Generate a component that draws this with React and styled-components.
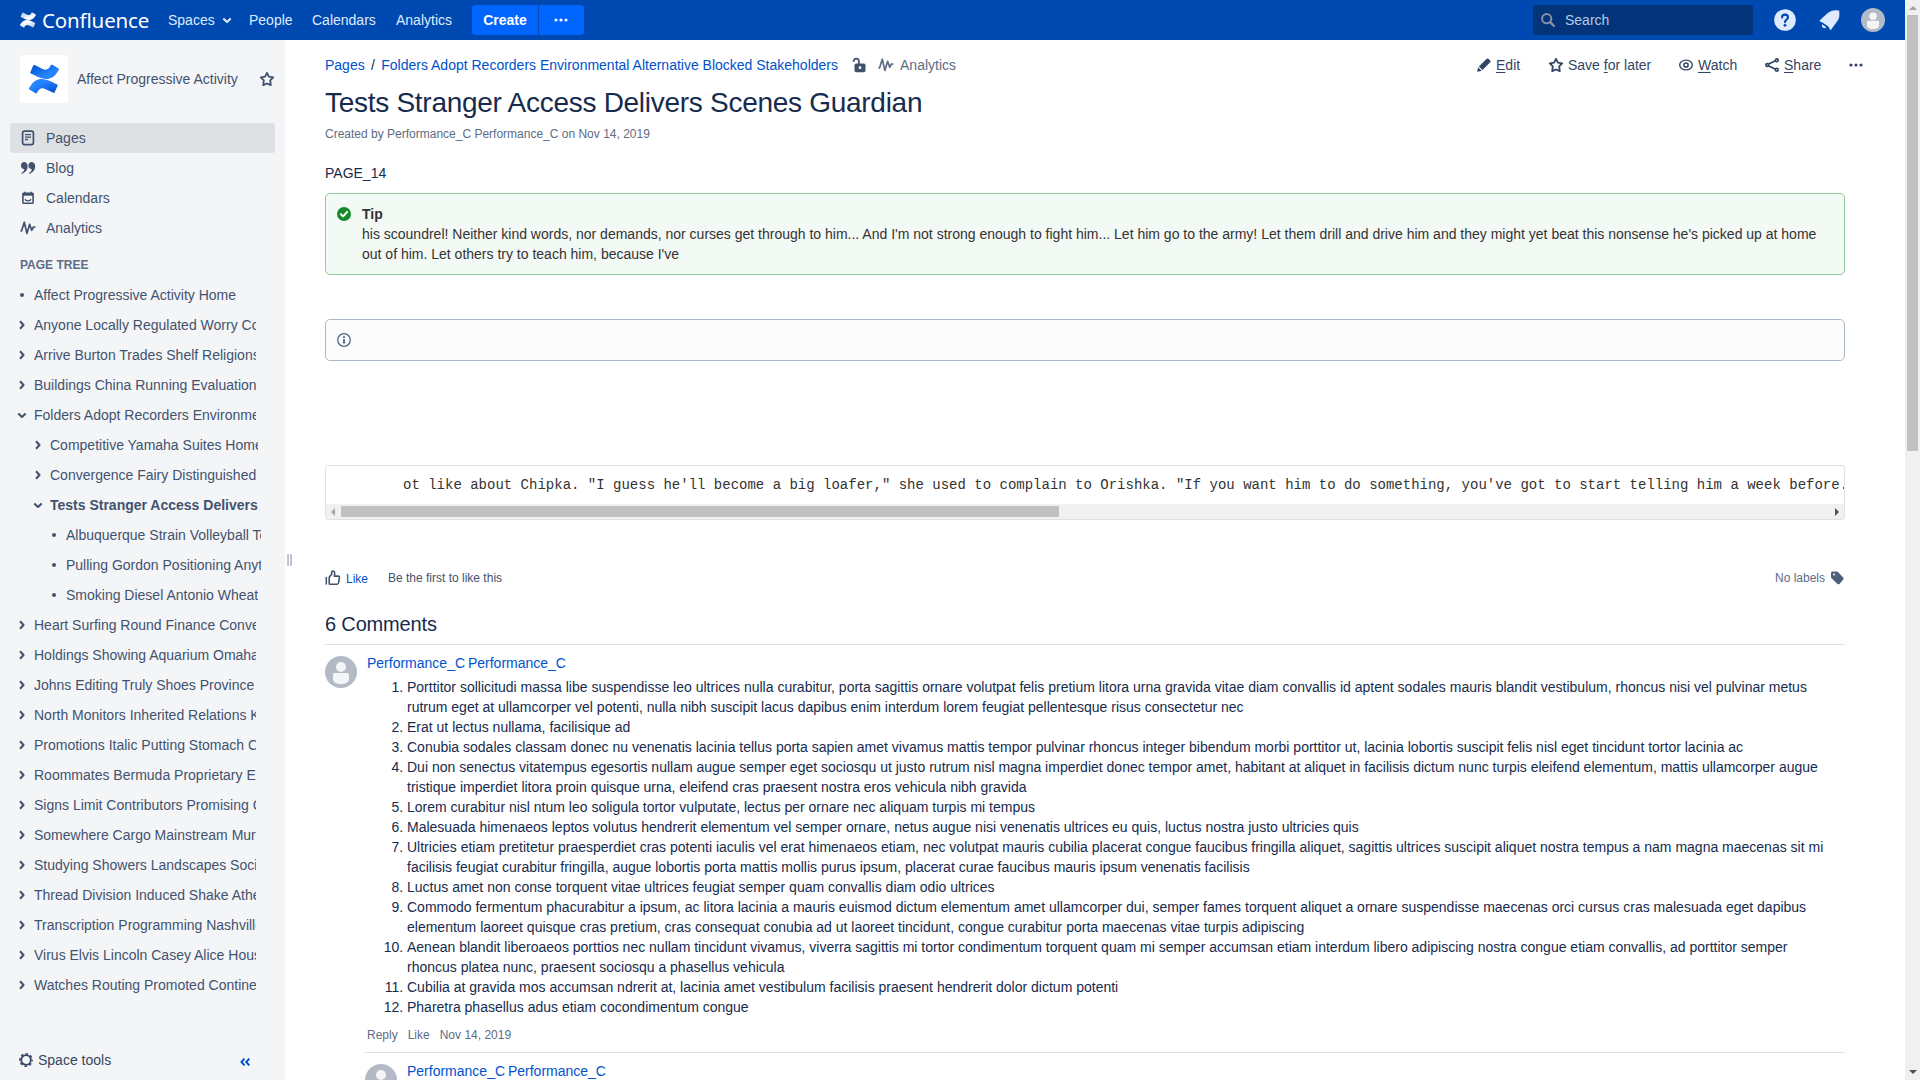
import React from 'react';
import styled, { createGlobalStyle } from 'styled-components';

const Global = createGlobalStyle`
  *, *::before, *::after { box-sizing: border-box; }
  html, body { margin: 0; padding: 0; overflow: hidden; background: #fff; }
  body {
    font-family: "Liberation Sans", Arial, sans-serif;
    font-size: 14px;
    line-height: 20px;
    color: #172b4d;
  }
  svg { display: block; flex: none; }
`;

const Window = styled.div`
  display: flex;
  width: 1920px;
  height: 1080px;
  overflow: hidden;
`;

const Page = styled.div`
  display: flex;
  flex-direction: column;
  width: 1905px;
  height: 1080px;
`;

/* ---------- header ---------- */

const Header = styled.header`
  display: flex;
  justify-content: space-between;
  align-items: center;
  flex: none;
  height: 40px;
  padding: 0 20px 0 20px;
  background: #0049b0;
  color: #deebff;
`;

const HeaderGroup = styled.div`
  display: flex;
  align-items: center;
`;

const Brand = styled.div`
  display: flex;
  align-items: center;
  gap: 6px;
  width: 148px;
`;

const Wordmark = styled.span`
  font-family: "Noto Sans", sans-serif;
  font-size: 20.5px;
  line-height: 24px;
  letter-spacing: -0.15px;
  color: #fff;
`;

const NavItem = styled.a`
  display: flex;
  align-items: center;
  gap: 6px;
  width: ${(p) => p.$width}px;
`;

const CreateGroup = styled.div`
  display: flex;
  gap: 1px;
  height: 30px;
`;

const CreateButton = styled.button`
  display: flex;
  align-items: center;
  justify-content: center;
  width: ${(p) => p.$width}px;
  height: 30px;
  padding: ${(p) => (p.$end ? '0 2px 0 0' : '0')};
  border: 0;
  border-radius: ${(p) => (p.$end ? '0 3px 3px 0' : '3px 0 0 3px')};
  background: #0065ff;
  color: #fff;
  font: bold 14px "Liberation Sans", Arial, sans-serif;
`;

const Search = styled.div`
  display: flex;
  align-items: center;
  gap: 10px;
  width: 220px;
  height: 30px;
  padding-left: 8px;
  margin-right: 21px;
  border-radius: 3px;
  background: #03347a;
  color: #b5c8e6;
`;

const HeaderIcon = styled.div`
  margin-right: ${(p) => p.$gap}px;
`;

/* ---------- sidebar ---------- */

const Body = styled.div`
  display: flex;
  flex: 1;
  min-height: 0;
`;

const Sidebar = styled.aside`
  display: flex;
  flex-direction: column;
  width: 285px;
  padding-top: 15px;
  background: #f4f5f7;
  color: #42526e;
`;

const SpaceHeader = styled.div`
  display: flex;
  align-items: center;
  height: 48px;
  padding: 0 10px 0 20px;
`;

const SpaceLogo = styled.div`
  display: flex;
  align-items: center;
  justify-content: center;
  width: 48px;
  height: 48px;
  border-radius: 3px;
  background: #fff;
`;

const SpaceName = styled.span`
  flex: 1;
  margin-left: 9px;
`;

const SideNav = styled.nav`
  margin: 20px 10px 0;
`;

const SideLink = styled.a`
  display: flex;
  align-items: center;
  gap: 10px;
  height: 30px;
  padding-left: 10px;
  border-radius: 3px;
  background: ${(p) => (p.$active ? '#dfe0e4' : 'transparent')};
`;

const TreeTitle = styled.h5`
  margin: 12px 0 5px 20px;
  font-size: 12px;
  line-height: 20px;
  font-weight: bold;
  color: #5e6c84;
`;

const Tree = styled.div`
  flex: 1;
`;

const TreeRow = styled.div`
  display: flex;
  align-items: center;
  width: ${(p) => [256, 258, 261][p.$level]}px;
  height: 30px;
  padding-left: ${(p) => 16 + p.$level * 16}px;
  overflow: hidden;
  white-space: nowrap;
  font-weight: ${(p) => (p.$current ? 'bold' : 'normal')};
`;

const TreeMarker = styled.span`
  display: flex;
  flex: none;
  width: 18px;
`;

const TreeLabel = styled.span`
  overflow: hidden;
`;

const SideFooter = styled.div`
  display: flex;
  align-items: center;
  justify-content: space-between;
  height: 40px;
  padding: 0 35px 0 19px;
  color: #344563;
`;

const SpaceTools = styled.span`
  display: flex;
  align-items: center;
  gap: 5px;
`;

const Collapse = styled.span`
  padding-top: 3px;
`;

const Splitter = styled.div`
  display: flex;
  align-items: center;
  gap: 1px;
  width: 40px;
  padding-left: 2px;
`;

const Grip = styled.i`
  width: 2px;
  height: 12px;
  background: #c1c7d0;
`;

/* ---------- content ---------- */

const Content = styled.main`
  width: 1520px;
  overflow: hidden;
`;

const TopRow = styled.div`
  display: flex;
  justify-content: space-between;
  height: 20px;
  margin-top: 15px;
`;

const ContentShell = styled.div`
  display: flex;
  flex-direction: column;
  width: 1540px;
`;

const Crumbs = styled.div`
  display: flex;
  align-items: center;
`;

const Link = styled.a`
  color: #0052cc;
`;

const Author = styled(Link)`
  word-spacing: -1px;
`;

const Slash = styled.span`
  width: 16.500px;
  text-align: center;
`;

const CrumbIcon = styled.span`
  margin: 0 ${(p) => p.$right}px 0 ${(p) => p.$left}px;
`;

const Muted = styled.span`
  color: #5e6c84;
`;

const Actions = styled.div`
  display: flex;
  align-items: center;
  color: #344563;
`;

const Action = styled.a`
  display: flex;
  align-items: center;
  gap: ${(p) => p.$gap}px;
  width: ${(p) => p.$width}px;

  u { text-underline-offset: 2px; }
`;

const Title = styled.h1`
  margin: 10px 0 0;
  font-size: 28px;
  line-height: 35px;
  font-weight: normal;
  letter-spacing: -0.28px;
`;

const Meta = styled.div`
  margin-top: 4px;
  font-size: 12px;
  color: #5e6c84;
`;

const Paragraph = styled.p`
  margin: 19px 0 10px;
`;

const Panel = styled.div`
  display: flex;
  height: ${(p) => p.$height}px;
  padding: 10px 10px 10px 11px;
  border: 1px solid ${(p) => (p.$tip ? '#91c89c' : '#aab8c6')};
  border-radius: 5px;
  background: ${(p) => (p.$tip ? '#f3f9f4' : '#fcfcfc')};
  color: #333;
`;

const PanelIcon = styled.div`
  width: 25px;
  padding-top: 3px;
`;

const PanelText = styled.div`
  flex: 1;
`;

const Spacer = styled.div`
  height: ${(p) => p.$size}px;
`;

const CodeBox = styled.div`
  display: flex;
  flex-direction: column;
  height: 55px;
  border: 1px solid #dfe1e5;
  border-radius: 3px;
  overflow: hidden;
`;

const CodeText = styled.pre`
  flex: 1;
  margin: 0;
  padding: 9px 0 0 77px;
  overflow: hidden;
  font-family: "Liberation Mono", monospace;
  font-size: 14px;
  line-height: 20px;
  color: #333;
`;

const HBar = styled.div`
  display: flex;
  align-items: center;
  justify-content: space-between;
  height: 15px;
  padding: 0 5px;
  background: #f0f0f0;
`;

const HThumb = styled.div`
  width: 718px;
  height: 11px;
  margin: 0 auto 0 6px;
  background: #c0c0c0;
`;

const LikeRow = styled.div`
  display: flex;
  align-items: center;
  height: 20px;
  margin-top: 48px;
  font-size: 12px;
`;

const LikeLink = styled(Link)`
  width: 42px;
  margin-left: 5px;
  padding-top: 1px;
`;

const LikeNote = styled.span`
  flex: 1;
  color: #42526e;
`;

const Labels = styled.span`
  display: flex;
  align-items: center;
  gap: 5px;
  color: #5e6c84;
`;

const CommentsTitle = styled.h2`
  margin: 24px 0 0;
  height: 33px;
  border-bottom: 1px solid #dfe1e5;
  font-size: 20px;
  line-height: 24px;
  font-weight: normal;
  letter-spacing: -0.16px;
`;

const Comment = styled.article`
  display: flex;
  gap: 10px;
  margin-left: ${(p) => (p.$reply ? 40 : 0)}px;
  padding-top: 11px;
  border-top: ${(p) => (p.$reply ? '1px solid #dfe1e5' : '0')};
`;

const CommentBody = styled.div`
  flex: 1;
  margin-top: -3px;
`;

const CommentList = styled.ol`
  margin: 4px 0 0;
  padding: 0 10px 0 40px;
`;

const CommentFooter = styled.div`
  display: flex;
  gap: 10px;
  margin: 8px 0 7px;
  font-size: 12px;
  color: #5e6c84;
`;

/* ---------- window scrollbar ---------- */

const VBar = styled.div`
  display: flex;
  flex-direction: column;
  align-items: center;
  justify-content: space-between;
  width: 15px;
  height: 1080px;
  padding: 6px 0;
  background: #f0f0f0;
`;

const VThumb = styled.div`
  width: 11px;
  height: 436px;
  margin: 5px 0 auto;
  background: #c0c0c0;
`;

/* ---------- icons ---------- */

const Arrow = ({ dir, color }) => {
  const d = { up: 'M0 4 4 0l4 4z', down: 'M0 0h8L4 4z', left: 'M4 0v8L0 4z', right: 'M0 0v8l4-4z' }[dir];
  const vertical = dir === 'up' || dir === 'down';
  return <svg width={vertical ? 8 : 4} height={vertical ? 4 : 8}><path d={d} fill={color} /></svg>;
};

const ConfluenceMark = ({ size, from, to, id }) => (
  <svg width={size} height={size} viewBox="0 0 256 246">
    <defs>
      <linearGradient id={`${id}a`} x1="99%" y1="113%" x2="34%" y2="38%">
        <stop offset="18%" stopColor={from} />
        <stop offset="100%" stopColor={to} />
      </linearGradient>
      <linearGradient id={`${id}b`} x1="1%" y1="-13%" x2="66%" y2="62%">
        <stop offset="18%" stopColor={from} />
        <stop offset="100%" stopColor={to} />
      </linearGradient>
    </defs>
    <path fill={`url(#${id}a)`} d="M9.26 187.28c-2.64 4.31-5.6 9.3-8.12 13.28a8.13 8.13 0 0 0 2.72 11.05l52.82 32.5a8.13 8.13 0 0 0 11.26-2.76c2.11-3.53 4.84-8.13 7.8-13.05 20.93-34.54 41.98-30.31 79.93-12.19l52.37 24.9a8.13 8.13 0 0 0 10.93-4.06l25.15-56.88a8.13 8.13 0 0 0-4.06-10.65c-11.05-5.2-33.03-15.56-52.82-25.1C116.06 109.7 55.54 112.02 9.26 187.28z" />
    <path fill={`url(#${id}b)`} d="M246.12 58.23c2.64-4.3 5.6-9.3 8.12-13.28a8.13 8.13 0 0 0-2.72-11.05L198.7 1.4a8.13 8.13 0 0 0-11.42 2.7c-2.11 3.54-4.83 8.13-7.8 13.05-20.92 34.54-41.97 30.32-79.92 12.2L47.35 4.57a8.13 8.13 0 0 0-10.93 4.06L11.28 65.51a8.13 8.13 0 0 0 4.06 10.65c11.05 5.2 33.03 15.56 52.82 25.1 71.26 34.5 131.77 32.1 177.96-43.03z" />
  </svg>
);

const Chevron = ({ down, color = 'currentColor' }) => (
  <svg width="12" height="12" viewBox="0 0 12 12" fill="none" stroke={color} strokeWidth="2.100" strokeLinejoin="round">
    <path d={down ? 'M2.300 4.400 6 7.900l3.700-3.500' : 'M4 2.300 7.500 6 4 9.700'} />
  </svg>
);

const Dots = ({ width = 14 }) => (
  <svg width={width} height="4" viewBox="0 0 14 4" fill="currentColor">
    <circle cx="2" cy="2" r="1.6" /><circle cx="7" cy="2" r="1.6" /><circle cx="12" cy="2" r="1.6" />
  </svg>
);

const StarIcon = () => (
  <svg width="16" height="16" viewBox="0 0 16 16" fill="none" stroke="currentColor" strokeWidth="1.8" strokeLinejoin="round">
    <path d="M8 1.800l1.900 3.900 4.300.6-3 3 .6 4.800L8 12.500l-3.800 1.600.6-4.800-3-3 4.300-.6z" />
  </svg>
);

const Pulse = () => (
  <svg width="16" height="16" viewBox="0 0 16 16" fill="none" stroke="currentColor" strokeWidth="1.700" strokeLinejoin="round" strokeLinecap="round">
    <path d="M1 10.800h.6L4.300 2.200 6.900 13.400 9.600 4.300l2.100 6 1.700-3.300h1.400" />
  </svg>
);

const PageIcon = () => (
  <svg width="16" height="16" viewBox="0 0 16 16" fill="none" stroke="currentColor">
    <rect x="2.600" y="1.200" width="10.800" height="13.400" rx="1.800" strokeWidth="1.700" />
    <path d="M5 4.700h6M5 7.100h6M5 9.500h3" strokeWidth="1.300" />
  </svg>
);

const QuoteIcon = () => (
  <svg width="16" height="16" viewBox="0 0 16 16" fill="currentColor">
    <path d="M4 1.900c2.200 0 3.700 1.700 3.700 4.400 0 3.600-2.300 6.500-5.600 7.400-.7.1-.9-.7-.3-1 1.600-.9 2.400-2.200 2.500-3.500C2.300 9.300.9 7.700.9 5.600.9 3.500 2.300 1.900 4 1.900z" />
    <path d="M11.500 1.900c2.200 0 3.700 1.700 3.700 4.400 0 3.600-2.300 6.500-5.600 7.400-.7.1-.9-.7-.3-1 1.600-.9 2.400-2.200 2.500-3.500-2 .1-3.400-1.500-3.400-3.600 0-2.100 1.400-3.700 3.100-3.700z" />
  </svg>
);

const CalendarIcon = () => (
  <svg width="16" height="16" viewBox="0 0 16 16" fill="none" stroke="currentColor">
    <rect x="2.900" y="3.300" width="10.200" height="10" rx=".8" strokeWidth="1.600" />
    <path d="M2.500 4.500h11" strokeWidth="2.400" />
    <path d="M4.700 1.800v2M11.300 1.800v2" strokeWidth="1.600" />
    <path d="M5 9.300c.6 2 5.400 2 6 0" strokeWidth="1.300" />
  </svg>
);

const Gear = () => (
  <svg width="14" height="14" viewBox="0 0 14 14" fill="none" stroke="currentColor">
    <circle cx="7" cy="7" r="4.800" strokeWidth="1.800" />
    <circle cx="7" cy="7" r="6.200" strokeWidth="1.400" strokeDasharray="2.630 2.240" strokeDashoffset="1.300" />
  </svg>
);

const Avatar = ({ size }) => (
  <svg width={size} height={size} viewBox="0 0 32 32">
    <circle cx="16" cy="16" r="16" fill="#b3bac5" />
    <circle cx="16" cy="11" r="5" fill="#f4f5f7" />
    <path d="M8 18.500a1.500 1.500 0 0 1 1.500-1.500h13a1.500 1.500 0 0 1 1.500 1.500v5c0 6.200-16 6.200-16 0z" fill="#f4f5f7" />
  </svg>
);

const TREE = [
  ['Affect Progressive Activity Home', 0, 'leaf'],
  ['Anyone Locally Regulated Worry Contents', 0],
  ['Arrive Burton Trades Shelf Religions', 0],
  ['Buildings China Running Evaluation', 0],
  ['Folders Adopt Recorders Environmental', 0, 'open'],
  ['Competitive Yamaha Suites Homes', 1],
  ['Convergence Fairy Distinguished', 1],
  ['Tests Stranger Access Delivers', 1, 'open', true],
  ['Albuquerque Strain Volleyball Tops', 2, 'leaf'],
  ['Pulling Gordon Positioning Anything', 2, 'leaf'],
  ['Smoking Diesel Antonio Wheat', 2, 'leaf'],
  ['Heart Surfing Round Finance Conversion', 0],
  ['Holdings Showing Aquarium Omaha', 0],
  ['Johns Editing Truly Shoes Province', 0],
  ['North Monitors Inherited Relations K', 0],
  ['Promotions Italic Putting Stomach C', 0],
  ['Roommates Bermuda Proprietary E', 0],
  ['Signs Limit Contributors Promising C', 0],
  ['Somewhere Cargo Mainstream Mur', 0],
  ['Studying Showers Landscapes Soci', 0],
  ['Thread Division Induced Shake Athe', 0],
  ['Transcription Programming Nashville', 0],
  ['Virus Elvis Lincoln Casey Alice House', 0],
  ['Watches Routing Promoted Contine', 0],
];

const ITEMS = [
  'Porttitor sollicitudi massa libe suspendisse leo ultrices nulla curabitur, porta sagittis ornare volutpat felis pretium litora urna gravida vitae diam convallis id aptent sodales mauris blandit vestibulum, rhoncus nisi vel pulvinar metus rutrum eget at ullamcorper vel potenti, nulla nibh suscipit lacus dapibus enim interdum lorem feugiat pellentesque risus consectetur nec',
  'Erat ut lectus nullama, facilisique ad',
  'Conubia sodales classam donec nu venenatis lacinia tellus porta sapien amet vivamus mattis tempor pulvinar rhoncus integer bibendum morbi porttitor ut, lacinia lobortis suscipit felis nisl eget tincidunt tortor lacinia ac',
  'Dui non senectus vitatempus egesortis nullam augue semper eget sociosqu ut justo rutrum nisl magna imperdiet donec tempor amet, habitant at aliquet in facilisis dictum nunc turpis eleifend elementum, mattis ullamcorper augue tristique imperdiet litora proin quisque urna, eleifend cras praesent nostra eros vehicula nibh gravida',
  'Lorem curabitur nisl ntum leo soligula tortor vulputate, lectus per ornare nec aliquam turpis mi tempus',
  'Malesuada himenaeos leptos volutus hendrerit elementum vel semper ornare, netus augue nisi venenatis ultrices eu quis, luctus nostra justo ultricies quis',
  'Ultricies etiam pretitetur praesperdiet cras potenti iaculis vel erat himenaeos etiam, nec volutpat mauris cubilia placerat congue faucibus fringilla aliquet, sagittis ultrices suscipit aliquet nostra tempus a nam magna maecenas sit mi facilisis feugiat curabitur fringilla, augue lobortis porta mattis mollis purus ipsum, placerat curae faucibus mauris ipsum venenatis facilisis',
  'Luctus amet non conse torquent vitae ultrices feugiat semper quam convallis diam odio ultrices',
  'Commodo fermentum phacurabitur a ipsum, ac litora lacinia a mauris euismod dictum elementum amet ullamcorper dui, semper fames torquent aliquet a ornare suspendisse maecenas orci cursus cras malesuada eget dapibus elementum laoreet quisque cras pretium, cras consequat conubia ad ut laoreet tincidunt, congue curabitur porta maecenas vitae turpis adipiscing',
  'Aenean blandit liberoaeos porttios nec nullam tincidunt vivamus, viverra sagittis mi tortor condimentum torquent quam mi semper accumsan etiam interdum libero adipiscing nostra congue etiam convallis, ad porttitor semper rhoncus platea nunc, praesent sociosqu a phasellus vehicula',
  'Cubilia at gravida mos accumsan ndrerit at, lacinia amet vestibulum facilisis praesent hendrerit dolor dictum potenti',
  'Pharetra phasellus adus etiam cocondimentum congue',
];

const Marker = ({ kind }) => (
  <TreeMarker>
    {kind === 'leaf' ? (
      <svg width="12" height="12"><circle cx="6" cy="6" r="2" fill="currentColor" /></svg>
    ) : (
      <Chevron down={kind === 'open'} />
    )}
  </TreeMarker>
);

export default function App() {
  return (
    <Window>
      <Global />
      <Page>
        <Header>
          <HeaderGroup>
            <Brand>
              <ConfluenceMark size={16} from="#a9c3e8" to="#ffffff" id="h" />
              <Wordmark>Confluence</Wordmark>
            </Brand>
            <NavItem $width={81}>Spaces <Chevron down /></NavItem>
            <NavItem $width={63}>People</NavItem>
            <NavItem $width={84}>Calendars</NavItem>
            <NavItem $width={76}>Analytics</NavItem>
            <CreateGroup>
              <CreateButton $width={66}>Create</CreateButton>
              <CreateButton $width={45} $end><Dots /></CreateButton>
            </CreateGroup>
          </HeaderGroup>
          <HeaderGroup>
            <Search>
              <svg width="14" height="14" viewBox="0 0 14 14" fill="none" stroke="#8590a2">
                <circle cx="5.700" cy="5.700" r="4.600" strokeWidth="2" />
                <path d="M9.200 9.200 13 13" strokeWidth="2.400" strokeLinecap="round" />
              </svg>
              Search
            </Search>
            <HeaderIcon $gap={23}>
              <svg width="22" height="22" viewBox="0 0 22 22">
                <circle cx="11" cy="11" r="10.800" fill="#deebff" />
                <path d="M8 8.500c0-3.900 6-3.900 6 0 0 2.200-3 2.100-3 4.700" fill="none" stroke="#0049b0" strokeWidth="2.100" strokeLinecap="round" />
                <circle cx="11" cy="16.300" r="1.400" fill="#0049b0" />
              </svg>
            </HeaderIcon>
            <HeaderIcon $gap={21}>
              <svg width="21" height="21" viewBox="0 0 21 21" fill="#deebff">
                <path d="M12.500.9c2.400-.7 5-.7 6.500-.2l.9-.4.600.6-.4.900c.8 3 .3 6.700-1.500 9l-6.600 8.900c-.2.400-.6.400-.8 0l-1.900-3.200-5.500-3.700-3-1.600c-.4-.2-.4-.6 0-.9L8.500 3.300C9.600 2.300 11 1.300 12.500.9z" />
                <path d="M3.200 14.200 7.200 17.200c-.9 1.100-2.300 1.200-3.200.5s-1.400-2.200-.8-3.500z" />
              </svg>
            </HeaderIcon>
            <Avatar size={24} />
          </HeaderGroup>
        </Header>
        <Body>
          <Sidebar>
            <SpaceHeader>
              <SpaceLogo><ConfluenceMark size={30} from="#0052cc" to="#2684ff" id="s" /></SpaceLogo>
              <SpaceName>Affect Progressive Activity</SpaceName>
              <StarIcon />
            </SpaceHeader>
            <SideNav>
              <SideLink $active><PageIcon />Pages</SideLink>
              <SideLink><QuoteIcon />Blog</SideLink>
              <SideLink><CalendarIcon />Calendars</SideLink>
              <SideLink><Pulse />Analytics</SideLink>
            </SideNav>
            <TreeTitle>PAGE TREE</TreeTitle>
            <Tree>
              {TREE.map(([label, level, kind, current]) => (
                <TreeRow key={label} $level={level} $current={current}>
                  <Marker kind={kind} />
                  <TreeLabel>{label}</TreeLabel>
                </TreeRow>
              ))}
            </Tree>
            <SideFooter>
              <SpaceTools><Gear />Space tools</SpaceTools>
              <Collapse>
                <svg width="10" height="8" viewBox="0 0 10 8" fill="none" stroke="#0052cc" strokeWidth="1.900">
                  <path d="M4.500.6 1.400 4l3.100 3.400M9.300.6 6.200 4l3.100 3.400" />
                </svg>
              </Collapse>
            </SideFooter>
          </Sidebar>
          <Splitter><Grip /><Grip /></Splitter>
          <ContentShell>
            <TopRow>
              <Crumbs>
                <Link>Pages</Link>
                <Slash>/</Slash>
                <Link>Folders Adopt Recorders Environmental Alternative Blocked Stakeholders</Link>
                <CrumbIcon $left={14} $right={11}>
                  <svg width="14" height="16" viewBox="0 0 14 16">
                    <rect x="2.500" y="6.400" width="11" height="8.800" rx="1.600" fill="#42526e" />
                    <path d="M1.700 4.800C1.200.8 6.500.6 6.900 4v3" fill="none" stroke="#42526e" strokeWidth="1.700" />
                    <circle cx="8" cy="10.700" r="1.400" fill="#fff" />
                  </svg>
                </CrumbIcon>
                <CrumbIcon $left={1} $right={6}><Muted><Pulse /></Muted></CrumbIcon>
                <Muted>Analytics</Muted>
              </Crumbs>
              <Actions>
                <Action $width={71} $gap={5}>
                  <svg width="14" height="14" viewBox="0 0 14 14" fill="currentColor">
                    <path d="M9.400.9c.7-.7 1.600-.7 2.300 0l1.300 1.300c.7.7.7 1.600 0 2.300L5.500 12 1.900 8.400zM1.200 9.300l3.400 3.400-3.700 1.100c-.5.100-.8-.2-.7-.7z" />
                  </svg>
                  <span><u>E</u>dit</span>
                </Action>
                <Action $width={131} $gap={4}><StarIcon /><span>Save <u>f</u>or later</span></Action>
                <Action $width={86} $gap={5}>
                  <svg width="14" height="14" viewBox="0 0 14 14" fill="none" stroke="currentColor">
                    <ellipse cx="7" cy="7" rx="6.300" ry="4.900" strokeWidth="1.400" />
                    <circle cx="7" cy="7" r="2.100" strokeWidth="1.500" />
                  </svg>
                  <span><u>W</u>atch</span>
                </Action>
                <Action $width={84} $gap={5}>
                  <svg width="14" height="14" viewBox="0 0 14 14" fill="none" stroke="currentColor" strokeWidth="1.600">
                    <path d="M3.200 6.300 10.500 2.700M3.200 7.700l7.300 3.600" />
                    <circle cx="2.200" cy="7" r="1.400" /><circle cx="11.800" cy="2.300" r="1.400" /><circle cx="11.800" cy="11.700" r="1.400" />
                  </svg>
                  <span><u>S</u>hare</span>
                </Action>
                <Action $width={16}><Dots /></Action>
              </Actions>
            </TopRow>
            <Content>
              <Title>Tests Stranger Access Delivers Scenes Guardian</Title>
              <Meta>Created by Performance_C Performance_C on Nov 14, 2019</Meta>
              <Paragraph>PAGE_14</Paragraph>
              <Panel $tip $height={82}>
                <PanelIcon>
                  <svg width="14" height="14" viewBox="0 0 14 14">
                    <circle cx="7" cy="7" r="7" fill="#14892c" />
                    <path d="M3.900 7.300 6.100 9.400l4.100-4.500" fill="none" stroke="#fff" strokeWidth="2" strokeLinecap="round" />
                  </svg>
                </PanelIcon>
                <PanelText>
                  <b>Tip</b>
                  <div>his scoundrel! Neither kind words, nor demands, nor curses get through to him... And I'm not strong enough to fight him... Let him go to the army! Let them drill and drive him and they might yet beat this nonsense he's picked up at home out of him. Let others try to teach him, because I've</div>
                </PanelText>
              </Panel>
              <Spacer $size={44} />
              <Panel $height={42}>
                <PanelIcon>
                  <svg width="14" height="14" viewBox="0 0 14 14" fill="none" stroke="#4a6785">
                    <circle cx="7" cy="7" r="6.300" strokeWidth="1.300" />
                    <path d="M7 6.200v4.300M7 3.300v1.700" strokeWidth="1.900" />
                  </svg>
                </PanelIcon>
              </Panel>
              <Spacer $size={104} />
              <CodeBox>
                <CodeText>ot like about Chipka. "I guess he'll become a big loafer," she used to complain to Orishka. "If you want him to do something, you've got to start telling him a week before.</CodeText>
                <HBar>
                  <Arrow dir="left" color="#a3a3a3" />
                  <HThumb />
                  <Arrow dir="right" color="#505050" />
                </HBar>
              </CodeBox>
              <LikeRow>
                <svg width="16" height="16" viewBox="0 0 16 16" fill="none" stroke="#42526e" strokeLinejoin="round" strokeLinecap="round">
                  <path d="M1.300 7.500v6.600" strokeWidth="1.500" />
                  <path d="M4.200 13.500V7.800c0-.6.200-1 .6-1.400L6.700 4.300V2.200c0-1.400 2.300-1.600 2.800-.1.400 1.200.2 2.500-.2 4h3.900c.9 0 1.300.6 1.200 1.400l-.8 5.200c-.2.900-.8 1.500-1.600 1.500H5.200c-.6 0-1-.2-1-.7z" strokeWidth="1.600" />
                </svg>
                <LikeLink>Like</LikeLink>
                <LikeNote>Be the first to like this</LikeNote>
                <Labels>
                  No labels
                  <svg width="15" height="14" viewBox="0 0 15 14">
                    <path d="M1 2.200C1 1.200 1.800.6 2.700.6h4c.6 0 1.100.2 1.500.6l5 5.300c.6.600.6 1.400 0 2L9.500 12.900c-.6.600-1.500.6-2 0L1.600 7.300C1.200 6.900 1 6.400 1 5.900z" fill="#505f79" />
                    <circle cx="4" cy="3.600" r="1" fill="#fff" />
                  </svg>
                </Labels>
              </LikeRow>
              <CommentsTitle>6 Comments</CommentsTitle>
              <Comment>
                <Avatar size={32} />
                <CommentBody>
                  <Author>Performance_C Performance_C</Author>
                  <CommentList>
                    {ITEMS.map((text) => <li key={text}>{text}</li>)}
                  </CommentList>
                  <CommentFooter><span>Reply</span><span>Like</span><span>Nov 14, 2019</span></CommentFooter>
                </CommentBody>
              </Comment>
              <Comment $reply>
                <Avatar size={32} />
                <CommentBody><Author>Performance_C Performance_C</Author></CommentBody>
              </Comment>
            </Content>
          </ContentShell>
        </Body>
      </Page>
      <VBar>
        <Arrow dir="up" color="#a3a3a3" />
        <VThumb />
        <Arrow dir="down" color="#505050" />
      </VBar>
    </Window>
  );
}
